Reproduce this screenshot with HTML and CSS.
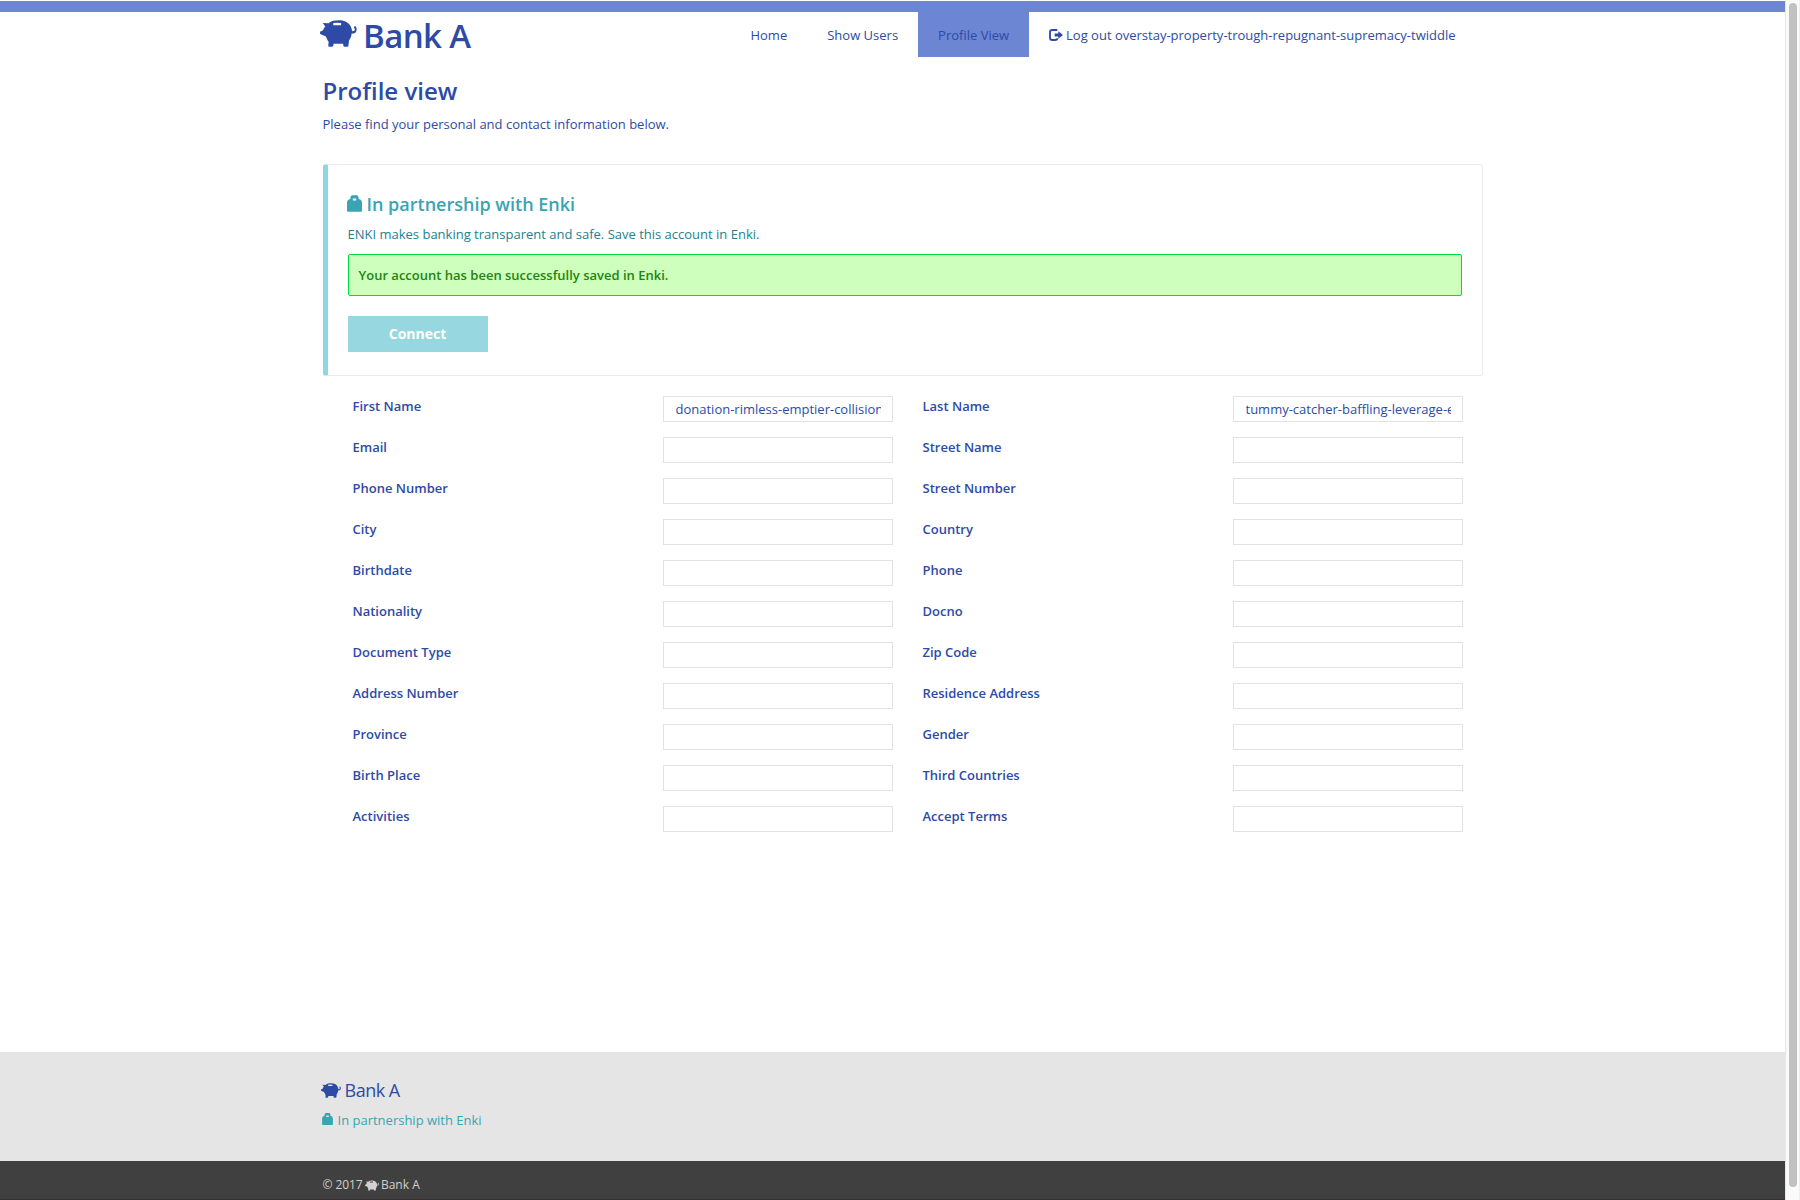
FILE: index.html
```html
<!DOCTYPE html>
<html lang="en">
<head>
<meta charset="utf-8">
<title>Bank A - Profile view</title>
<link rel="stylesheet" href="styles.css">
</head>
<body>
<svg class="defs" width="0" height="0" aria-hidden="true">
  <symbol id="pig" viewBox="0 0 112 82">
    <path fill-rule="evenodd" d="M8 9 L26 10 C34 3 45 1 57 1 C75 1 90 9 95 24 L98 34 C105 34 108 30 104 25 C102 21 104 18 108 19 C113 24 112 37 104 40 C101 42 99 41 96 41 C95 51 92 57 88 62 L86 79 Q85 81 82 81 L74 81 Q72 81 71 79 L70 72 L41 72 L40 79 Q39 81 36 81 L28 81 Q25 81 25 78 L26 66 C22 61 20 54 17 49 L3 44 Q0 43 0 40 L0 36 Q0 34 3 34 L9 31 C11 26 13 23 16 20 Z M40 9 L40 16 L64 16 L64 9 Q52 7 40 9 Z"/>
  </symbol>
  <symbol id="bag" viewBox="0 0 44 49">
    <path fill-rule="evenodd" d="M10 11 L10 6 Q11 0 16 0 L28 0 Q33 0 34 6 L34 11 L39 13 Q44 16 44 22 L44 46 Q44 49 41 49 L3 49 Q0 49 0 46 L0 22 Q0 16 5 13 Z M17 10 L17 16 L27 16 L27 10 Z"/>
  </symbol>
  <symbol id="logout" viewBox="0 0 42 36">
    <path d="M25 3 H10 Q3 3 3 10 V26 Q3 33 10 33 H18 Q25 33 25 28" fill="none" stroke="currentColor" stroke-width="5.5"/>
    <path d="M17 13.5 H28 V7 L42 18 L28 29 V22.5 H17 Z"/>
  </symbol>
</svg>
<div class="window">
  <div class="page">
    <header class="header">
      <div class="container header-row">
        <a class="brand"><svg class="brand-icon"><use href="#pig"/></svg><span>Bank A</span></a>
        <nav class="nav">
          <a class="nav-link">Home</a>
          <a class="nav-link">Show Users</a>
          <a class="nav-link active">Profile View</a>
          <a class="nav-link"><svg class="logout-icon"><use href="#logout"/></svg>Log out overstay-property-trough-repugnant-supremacy-twiddle</a>
        </nav>
      </div>
    </header>
    <main class="container main">
      <h1 class="title">Profile view</h1>
      <p class="lead">Please find your personal and contact information below.</p>
      <section class="card">
        <h2 class="card-title"><svg class="card-icon"><use href="#bag"/></svg>In partnership with Enki</h2>
        <p class="card-text">ENKI makes banking transparent and safe. Save this account in Enki.</p>
        <div class="alert">Your account has been successfully saved in Enki.</div>
        <button class="connect">Connect</button>
      </section>
      <form class="fields">
        <label class="field"><span>First Name</span><input value="donation-rimless-emptier-collision"></label>
        <label class="field"><span>Last Name</span><input value="tummy-catcher-baffling-leverage-exit"></label>
        <label class="field"><span>Email</span><input></label>
        <label class="field"><span>Street Name</span><input></label>
        <label class="field"><span>Phone Number</span><input></label>
        <label class="field"><span>Street Number</span><input></label>
        <label class="field"><span>City</span><input></label>
        <label class="field"><span>Country</span><input></label>
        <label class="field"><span>Birthdate</span><input></label>
        <label class="field"><span>Phone</span><input></label>
        <label class="field"><span>Nationality</span><input></label>
        <label class="field"><span>Docno</span><input></label>
        <label class="field"><span>Document Type</span><input></label>
        <label class="field"><span>Zip Code</span><input></label>
        <label class="field"><span>Address Number</span><input></label>
        <label class="field"><span>Residence Address</span><input></label>
        <label class="field"><span>Province</span><input></label>
        <label class="field"><span>Gender</span><input></label>
        <label class="field"><span>Birth Place</span><input></label>
        <label class="field"><span>Third Countries</span><input></label>
        <label class="field"><span>Activities</span><input></label>
        <label class="field"><span>Accept Terms</span><input></label>
      </form>
    </main>
    <footer class="footer">
      <div class="container">
        <div class="footer-brand"><svg class="footer-pig"><use href="#pig"/></svg>Bank A</div>
        <div class="footer-partner"><svg class="footer-bag"><use href="#bag"/></svg>In partnership with Enki</div>
      </div>
    </footer>
    <div class="copyright">
      <div class="container copyright-row"><span class="year">© 2017</span><svg class="copy-pig"><use href="#pig"/></svg><span>Bank A</span></div>
    </div>
  </div>
  <div class="scrollbar"><div class="thumb"></div></div>
</div>
</body>
</html>
```

FILE: styles.css
```css
* { box-sizing: border-box; }
body {
  margin: 0;
  background: #fff;
  color: #2d4ba6;
  font: 13px/20px "Open Sans", sans-serif;
}
h1, h2, p { margin: 0; }
svg { fill: currentColor; flex: none; }
.defs { display: block; position: absolute; }
.window { display: flex; width: 1800px; height: 1200px; overflow: hidden; }
.page { width: 1785px; height: 1200px; display: flex; flex-direction: column; padding-top: 1px; }
.container { width: 1160px; margin-left: 322.5px; }

.header { border-top: 11px solid #6c86d4; }
.header-row { display: flex; justify-content: space-between; height: 45px; padding-right: 7px; }
.brand { display: flex; margin-left: -2.5px; font-size: 33px; font-weight: 600; line-height: 48px; letter-spacing: -0.6px; }
.brand-icon { width: 37px; height: 27px; margin: 7.5px 6px 0 0; }
.nav { display: flex; }
.nav-link { display: flex; padding: 13px 20px 12px; white-space: nowrap; }
.nav-link.active { background: #6c86d4; }
.logout-icon { width: 14px; height: 12px; margin: 4px 3px 0 0; }

.main { flex: 1; }
.title { margin-top: 16px; font-size: 24px; line-height: 35px; font-weight: 600; }
.lead { margin-top: 6px; }
.card {
  height: 212px;
  margin-top: 30px;
  padding: 25px 20px 0;
  border: 1px solid #ebebeb;
  border-left: 5px solid #8bd8e1;
  border-radius: 3px;
  color: #23818f;
}
.card-title { display: flex; margin-left: -1px; font-size: 18px; line-height: 28px; font-weight: 600; color: #3aa4b3; }
.card-icon { width: 15px; height: 17px; margin: 5px 5px 0 0; }
.card-text { margin-top: 6px; }
.alert {
  height: 42px;
  margin-top: 10px;
  padding: 10px;
  border: 1px solid #00dc3c;
  border-radius: 2px;
  background: #ceffbd;
  color: #22850f;
  font-weight: 600;
}
.connect {
  display: block;
  width: 140px;
  height: 36px;
  margin-top: 20px;
  padding: 0;
  border: 0;
  background: #97d7df;
  color: #fff;
  font: 700 14px/36px "Open Sans", sans-serif;
}
.fields {
  display: grid;
  grid-template-columns: 540px 540px;
  column-gap: 30px;
  grid-auto-rows: 41px;
  padding: 20px 0 0 30px;
}
.field { display: flex; justify-content: space-between; align-items: flex-start; font-weight: 600; }
.field input {
  width: 230px;
  height: 26px;
  padding: 0 11px 1px 12px;
  border: 1px solid #e2e2e2;
  background: #fff;
  color: #2d4ba6;
  font: 13px/20px "Open Sans", sans-serif;
}

.footer { height: 109px; padding-top: 26px; background: #e5e5e5; }
.footer-brand { display: flex; margin-left: -2px; font-size: 18px; line-height: 24px; letter-spacing: -0.5px; }
.footer-pig { width: 20px; height: 15px; margin: 5px 4px 0 0; }
.footer-partner { display: flex; margin-top: 8px; margin-left: -1px; color: #3aa4b3; }
.footer-bag { width: 11px; height: 12px; margin: 3px 5px 0 0; }
.copyright { height: 39px; padding-top: 15px; background: #404040; border-bottom: 1px solid #3a2f33; color: #d0d0d0; font-size: 12px; line-height: 18px; }
.copyright-row { display: flex; font-weight: 500; }
.year { letter-spacing: -0.1px; }
.copy-pig { width: 14px; height: 11px; margin: 4px 2px 0 2.5px; }

.scrollbar { width: 15px; height: 1200px; padding: 3px 0 0 3px; background: #fafafa; border-left: 1px solid #e7e7e7; border-right: 1px solid #efefef; }
.thumb { width: 8px; height: 1184px; border-radius: 4px; background: #c1c1c1; }
```
